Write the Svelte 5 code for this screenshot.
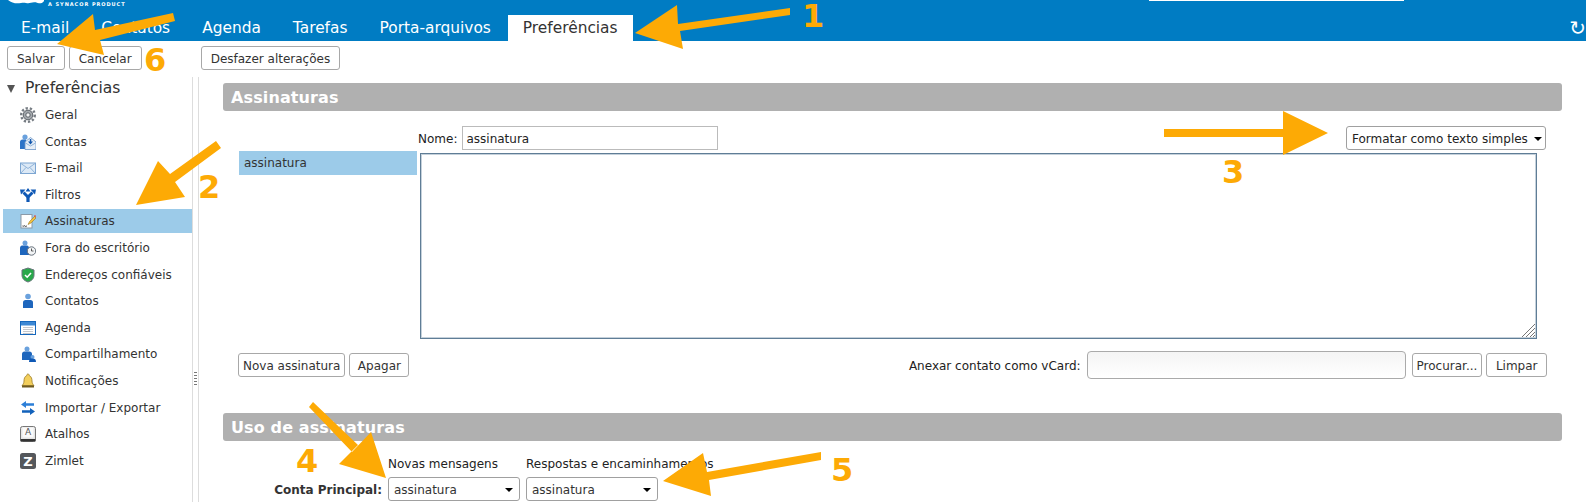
<script>
  const tabs = ['E-mail', 'Contatos', 'Agenda', 'Tarefas', 'Porta-arquivos', 'Preferências'];
  const items = [
    'Geral', 'Contas', 'E-mail', 'Filtros', 'Assinaturas', 'Fora do escritório', 'Endereços confiáveis',
    'Contatos', 'Agenda', 'Compartilhamento', 'Notificações', 'Importar / Exportar', 'Atalhos', 'Zimlet'
  ];
  const marks = [
    { n: '1', x: 802, y: 27 }, { n: '2', x: 198, y: 198 }, { n: '3', x: 1222, y: 183 },
    { n: '4', x: 296, y: 472 }, { n: '5', x: 831, y: 481 }, { n: '6', x: 144, y: 71 }
  ];
</script>

<div class="page">
  <header class="top">
    <div class="brand">
      <svg class="logo" width="36" height="5" viewBox="0 0 36 5">
        <path d="M0 0h36v1c-1 1.600-3 2.600-5 2.300-2-.4-3-1.400-5-1-3 .6-5 1.200-8 .7-2-.5-3-.4-5 0C9 3.700 4 3.600 0 0z" fill="#fff" />
      </svg>
      <span class="synacor">A SYNACOR PRODUCT</span>
      <span class="search"></span>
    </div>
    <nav class="tabs">
      {#each tabs as t}
        <span class="tab" class:active={t === 'Preferências'}>{t}</span>
      {/each}
      <span class="refresh">↻</span>
    </nav>
  </header>

  <div class="toolbar">
    <button class="btn">Salvar</button>
    <button class="btn">Cancelar</button>
    <button class="btn undo">Desfazer alterações</button>
  </div>

  <div class="body">
    <aside class="side">
      <div class="tree-head"><span class="caret"></span>Preferências</div>
      {#each items as it, i}
        <div class="row" class:sel={it === 'Assinaturas'}>
          <svg class="ico" width="16" height="16" viewBox="0 0 16 16">
            {#if i === 0}
              <circle cx="8" cy="8" r="6.800" fill="none" stroke="#767c83" stroke-width="2.400" stroke-dasharray="2.300 1.900" />
              <circle cx="8" cy="8" r="4.800" fill="#a4a9ae" stroke="#5d6369" />
              <circle cx="8" cy="8" r="2.200" fill="#f4f5f6" stroke="#5d6369" />
            {:else if i === 1}
              <circle cx="5" cy="3" r="2.600" fill="#6aa1dd" />
              <path d="M0 15V8c0-1.500 1-2.500 2.500-2.500H6V15z" fill="#2d74c8" />
              <path d="M5 8l5.500-4.500L16 8v7.500H5z" fill="#e6eef7" stroke="#6b96c8" stroke-width=".8" />
              <path d="M5.500 9l5 3 5-3" fill="none" stroke="#8fb3d9" />
              <path d="M9.800 5h1.500v2.500H13L10.500 10.500 8 7.500h1.800z" fill="#1257ad" />
            {:else if i === 2}
              <rect x=".5" y="3" width="15" height="10.500" fill="#dce9f6" stroke="#7da6d2" />
              <path d="M1 3.500l7 5 7-5M1 13l5-5.500M15 13l-5-5.500" fill="none" stroke="#8fb3d9" />
            {:else if i === 3}
              <path d="M8 15V9" fill="none" stroke="#0e58b5" stroke-width="3.200" />
              <path d="M8 10L3.500 5.500M8 10l4.500-4.500" fill="none" stroke="#0e58b5" stroke-width="3" />
              <path d="M8 1l2.500 3.500h-5zM0 2.500h5.500L1 7.500zM16 2.500h-5.500l4.500 5z" fill="#0e58b5" />
            {:else if i === 4}
              <rect x="1" y="1.500" width="11" height="13.500" fill="#fff" stroke="#8b9aa8" />
              <path d="M2.500 13c1 1 1.500-1 2.500 0s1 0 2 0" fill="none" stroke="#333" />
              <path d="M8 11.500l1.500-3 5-5 1.500 1.500-5 5z" fill="#f3c23f" stroke="#8f6a10" stroke-width=".5" />
              <path d="M14 3l1-1 1 1-.8 1.200z" fill="#e0413a" />
            {:else if i === 5}
              <circle cx="5" cy="3" r="2.500" fill="#6aa1dd" />
              <path d="M0 15V8c0-1.500 1-2.500 2-2.500h5c1 0 2 1 2 2.500v7z" fill="#1e66bd" />
              <circle cx="11.500" cy="11" r="4.200" fill="#f2f4f6" stroke="#67717c" />
              <path d="M11.500 8.500V11h2" fill="none" stroke="#333" stroke-width=".8" />
            {:else if i === 6}
              <path d="M8 1l6 2v5c0 4-3 6-6 7-3-1-6-3-6-7V3z" fill="#29a84a" stroke="#69757c" />
              <path d="M5 8l2.200 2.200L11 6" fill="none" stroke="#fff" stroke-width="1.600" />
            {:else if i === 7}
              <circle cx="8" cy="3.500" r="2.800" fill="#6aa1dd" />
              <path d="M3 15V9.500C3 8 4 7 5.500 7h5C12 7 13 8 13 9.500V15z" fill="#1e66bd" />
            {:else if i === 8}
              <rect x=".5" y="1.500" width="15" height="13" fill="#fff" stroke="#1668bd" />
              <rect x="1" y="2" width="14" height="3.500" fill="#3d88d4" />
              <path d="M3 7.500h10M3 9.500h10M3 11.500h10M3 13.500h10" stroke="#c5c8cc" />
            {:else if i === 9}
              <circle cx="7" cy="3" r="2.500" fill="#6aa1dd" />
              <path d="M2 14V8c0-1.500 1-2.500 2.500-2.500h5C11 5.500 12 6.500 12 8v6z" fill="#1e66bd" />
              <circle cx="12.500" cy="11" r="2" fill="#6aa1dd" />
              <path d="M9 16c0-2.500 1-3.500 3.500-3.500S16 13.500 16 16z" fill="#0e58b5" />
            {:else if i === 10}
              <path d="M8 1c1 0 1.200.8 1.200 1.500C11.500 3.500 12 6 12 8c0 2 1 3.500 2 4.500H2c1-1 2-2.500 2-4.500 0-2 .5-4.500 2.800-5.500C6.800 1.800 7 1 8 1z" fill="#f3cf5c" stroke="#9a7b24" stroke-width=".8" />
              <rect x="2" y="12.500" width="12" height="2" fill="#6f5a1e" />
            {:else if i === 11}
              <path d="M1 4.500L6 1v2.200h8v2.600H6V8z" fill="#2c7fd8" />
              <path d="M15 11.500L10 8v2.200H2v2.600h8V15z" fill="#1262bb" />
            {:else if i === 12}
              <rect x=".5" y=".5" width="15" height="15" rx="2" fill="#e6e6e6" stroke="#777" />
              <rect x="2.500" y="1.500" width="11" height="10" fill="#fafafa" />
              <rect x=".5" y="13" width="15" height="2.500" fill="#333" />
              <text x="8" y="9" class="key">A</text>
            {:else}
              <rect width="16" height="16" rx="2.500" fill="#55585c" />
              <text x="8" y="12.500" class="zed">Z</text>
            {/if}
          </svg>
          <span>{it}</span>
        </div>
      {/each}
    </aside>
    <div class="splitter"><span class="grip"></span></div>

    <main class="main">
      <h2 class="bar">Assinaturas</h2>
      <div class="pad">
        <div class="editor">
          <div class="name">
            <label for="sig-name">Nome:</label>
            <input id="sig-name" class="field" value="assinatura" />
            <span class="select format">Formatar como texto simples<i class="arr"></i></span>
          </div>
          <div class="list"><div class="list-sel">assinatura</div></div>
          <div class="area-wrap">
            <textarea class="area"></textarea>
            <svg class="resize" width="13" height="13" viewBox="0 0 13 13">
              <path d="M0 13L13 0M4 13l9-9M8 13l5-5M11 13l2-2" stroke="#777" fill="none" />
            </svg>
          </div>
        </div>
        <div class="actions">
          <button class="btn tight">Nova assinatura</button>
          <button class="btn mid">Apagar</button>
          <span class="vcard-label">Anexar contato como vCard:</span>
          <span class="vcard"></span>
          <button class="btn tight">Procurar...</button>
          <button class="btn wide">Limpar</button>
        </div>
      </div>

      <h2 class="bar second">Uso de assinaturas</h2>
      <div class="usage">
        <span></span>
        <span class="cap">Novas mensagens</span>
        <span class="cap">Respostas e encaminhamentos</span>
        <b class="acct">Conta Principal:</b>
        <span class="select">assinatura<i class="arr"></i></span>
        <span class="select">assinatura<i class="arr"></i></span>
      </div>
    </main>
  </div>

  <svg class="notes" width="1586" height="502" viewBox="0 0 1586 502">
    <g fill="#fdaa05">
      <path d="M790 8 678 24 677 5 635 33 683 49 680 31 790 15z" />
      <path d="M173 13 95 30 93 14 57 44 104 55 100 40 175 21z" />
      <path d="M216 141 170 174 158 161 136 205 185 197 175 182 221 148z" />
      <path d="M1164 129H1283V111L1328 133 1283 155V137H1164z" />
      <path d="M313 402 358 445 339 464 386 478 371 432 352 452 309 407z" />
      <path d="M821 452 707 472 703 453 663 481 711 496 709 480 821 460z" />
      {#each marks as m}
        <text x={m.x} y={m.y} class="mark">{m.n}</text>
      {/each}
    </g>
  </svg>
</div>

<style>
  :global(body) {
    margin: 0;
    background: #fff;
  }
  .page {
    position: relative;
    width: 1586px;
    height: 502px;
    overflow: hidden;
    font-family: "DejaVu Sans", sans-serif;
    font-size: 12px;
    color: #333;
  }
  .top {
    background: #007cc3;
    height: 41px;
  }
  .brand {
    display: flex;
    height: 15px;
    padding-left: 8px;
    color: #fff;
  }
  .logo {
    flex: none;
  }
  .synacor {
    margin-left: 4px;
    font-size: 5px;
    line-height: 8px;
    font-weight: 700;
    letter-spacing: .95px;
    white-space: nowrap;
  }
  .search {
    width: 255px;
    height: 1px;
    margin: 0 182px 0 auto;
    background: #fff;
  }
  .tabs {
    display: flex;
    height: 26px;
    padding-left: 5px;
  }
  .tab {
    margin: 0 1px;
    padding: 0 15px;
    font-size: 15.4px;
    line-height: 26px;
    color: #fff;
  }
  .tab.active {
    background: #fff;
    color: #333;
  }
  .refresh {
    margin-left: auto;
    font-size: 20px;
    line-height: 26px;
    color: #fff;
  }
  .toolbar {
    display: flex;
    gap: 4px;
    height: 36px;
    padding: 5px 0 0 7px;
    box-sizing: border-box;
  }
  .btn {
    height: 24px;
    padding: 2px 9px 0;
    border: 1px solid #a8a8a8;
    border-radius: 3px;
    background: #fff;
    font: inherit;
    color: #333;
  }
  .btn.tight {
    padding: 2px 4px 0;
  }
  .btn.mid {
    padding: 2px 7.500px 0;
  }
  .btn.wide {
    padding: 2px 8.500px 0;
  }
  .undo {
    margin-left: 55px;
  }
  .body {
    display: flex;
    height: 425px;
  }
  .side {
    width: 192px;
    flex: none;
    border-right: 1px solid #ddd;
  }
  .tree-head {
    display: flex;
    align-items: center;
    height: 22px;
    margin-bottom: 4px;
    padding-left: 7px;
    font-size: 15.500px;
  }
  .caret {
    width: 0;
    height: 0;
    margin: 1px 10px 0 0;
    border: 4.500px solid transparent;
    border-top: 8px solid #555;
    border-bottom: 0;
  }
  .row {
    display: flex;
    align-items: center;
    height: 24px;
    margin: 0 0 2.600px 3px;
    padding-left: 17px;
  }
  .row.sel {
    background: #9ccbe9;
  }
  .ico {
    flex: none;
    margin-right: 9px;
  }
  .key {
    font-size: 9px;
    text-anchor: middle;
    fill: #555;
  }
  .zed {
    font-size: 13px;
    font-weight: 700;
    text-anchor: middle;
    fill: #fff;
  }
  .splitter {
    display: flex;
    width: 5px;
    flex: none;
    align-items: center;
    justify-content: center;
    border-right: 1px solid #ddd;
  }
  .grip {
    width: 3px;
    height: 14px;
    margin-top: 178px;
    background: repeating-linear-gradient(#777 0 1px, #fff 1px 3px);
  }
  .main {
    flex: 1;
    min-width: 0;
    padding: 6px 24px 0 24px;
  }
  .bar {
    height: 28px;
    margin: 0;
    padding-left: 8px;
    background: #b0b0b0;
    border-radius: 3px;
    color: #fff;
    font-size: 16px;
    font-weight: 700;
    letter-spacing: .12px;
    line-height: 29px;
  }
  .second {
    margin-top: 34px;
  }
  .pad {
    padding: 15px 15px 0 15px;
  }
  .editor {
    display: grid;
    grid-template-columns: 181px 1fr;
    grid-template-rows: 24px 1fr;
    row-gap: 1px;
    margin: 0 1px;
  }
  .name {
    grid-column: 1 / 3;
    display: flex;
    align-items: center;
    padding-left: 179px;
    color: #222;
  }
  label {
    padding-top: 2px;
  }
  .field {
    width: 256px;
    height: 24px;
    box-sizing: border-box;
    margin-left: 5px;
    padding: 2px 3px 0;
    border: 1px solid #bbb;
    font: inherit;
    color: #222;
  }
  .select {
    position: relative;
    display: block;
    height: 24px;
    box-sizing: border-box;
    padding-left: 5px;
    border: 1px solid #a0a0a0;
    border-radius: 3px;
    line-height: 24px;
    white-space: nowrap;
  }
  .format {
    width: 200px;
    margin-left: auto;
  }
  .arr {
    position: absolute;
    top: 10px;
    right: 6px;
    border: 4px solid transparent;
    border-top: 4px solid #000;
    border-bottom: 0;
  }
  .format .arr {
    right: 3px;
  }
  .list-sel {
    height: 24px;
    margin-right: 3px;
    padding-left: 5px;
    background: #9ccbe9;
    line-height: 25px;
  }
  .area-wrap {
    position: relative;
    width: 1117px;
    height: 186px;
    margin-top: 2px;
  }
  .area {
    display: block;
    width: 100%;
    height: 100%;
    box-sizing: border-box;
    border: 1px solid #5f7d96;
    outline: 1px solid #c5d1db;
    outline-offset: -2px;
    resize: none;
    border-radius: 0;
  }
  .resize {
    position: absolute;
    right: 2px;
    bottom: 2px;
  }
  .actions {
    display: flex;
    align-items: center;
    gap: 4px;
    height: 28px;
    margin-top: 12px;
  }
  .vcard-label {
    margin-left: auto;
    margin-right: 2px;
    padding-top: 2px;
    color: #222;
  }
  .vcard {
    width: 319px;
    height: 28px;
    box-sizing: border-box;
    margin-right: 2px;
    border: 1px solid #aaa;
    border-radius: 4px;
    background: linear-gradient(#f4f4f4, #fff);
  }
  .usage {
    display: grid;
    grid-template-columns: 159px 132px 132px;
    grid-template-rows: 16px 24px;
    column-gap: 6px;
    row-gap: 5px;
    margin-top: 15px;
    align-items: center;
    white-space: nowrap;
  }
  .cap {
    color: #222;
  }
  .acct {
    padding-top: 2px;
    text-align: right;
  }
  .notes {
    position: absolute;
    top: 0;
    left: 0;
    pointer-events: none;
  }
  .mark {
    font-size: 32px;
    font-weight: 700;
    font-family: "DejaVu Sans", sans-serif;
  }
</style>
